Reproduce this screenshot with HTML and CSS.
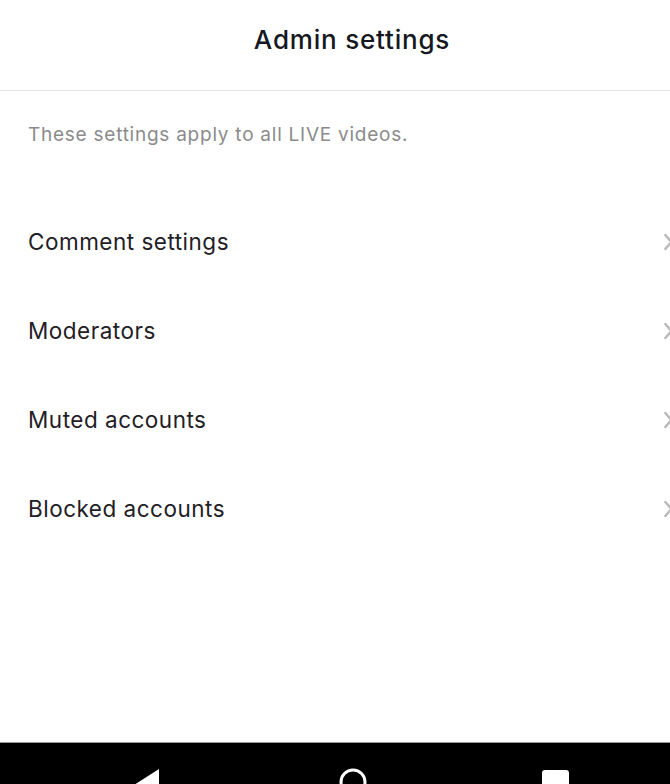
FILE: index.html
```html
<!DOCTYPE html>
<html lang="en">
<head>
  <meta charset="UTF-8" />
  <meta name="viewport" content="width=device-width, initial-scale=1.0"/>
  <title>Admin settings</title>
  <link rel="stylesheet" href="styles.css">
</head>
<body>
  <div class="screen">
    <header class="topbar">
      <h1>Admin settings</h1>
    </header>

    <p class="intro">These settings apply to all LIVE videos.</p>

    <ul class="menu">
      <li class="menu-item">
        <span>Comment settings</span>
        <svg class="chev" viewBox="0 0 10 18"><path d="M2 2l6 7-6 7" /></svg>
      </li>
      <li class="menu-item">
        <span>Moderators</span>
        <svg class="chev" viewBox="0 0 10 18"><path d="M2 2l6 7-6 7" /></svg>
      </li>
      <li class="menu-item">
        <span>Muted accounts</span>
        <svg class="chev" viewBox="0 0 10 18"><path d="M2 2l6 7-6 7" /></svg>
      </li>
      <li class="menu-item">
        <span>Blocked accounts</span>
        <svg class="chev" viewBox="0 0 10 18"><path d="M2 2l6 7-6 7" /></svg>
      </li>
    </ul>

    <!-- android nav bar, icons cut off at the bottom -->
    <nav class="navbar">
      <svg class="nav-back" viewBox="0 0 30 30"><path d="M25 1 L0 17 L25 33 Z" /></svg>
      <svg class="nav-home" viewBox="0 0 30 30"><circle cx="15" cy="15" r="12" /></svg>
      <span class="nav-recent"></span>
    </nav>
  </div>
</body>
</html>
```

FILE: styles.css
```css
* {
  box-sizing: border-box;
}
html, body {
  margin: 0;
  padding: 0;
  background: #fff;
}
body {
  font-family: Inter, "Noto Sans", sans-serif;
  overflow: hidden;
}
.screen {
  width: 670px;
  height: 784px;
  display: flex;
  flex-direction: column;
  overflow: hidden;
}
.topbar {
  height: 91px;
  border-bottom: 1px solid #e3e3e3;
  display: flex;
  justify-content: center;
  padding: 24px 0 0 34px;
}
.topbar h1 {
  margin: 0;
  font-size: 26px;
  font-weight: 500;
  color: #16181f;
  line-height: 32px;
  letter-spacing: 0.8px;
}
.intro {
  margin: 0;
  padding: 32px 28px 0;
  height: 106px;
  font-size: 19px;
  line-height: 24px;
  color: #8b8b8b;
  letter-spacing: 0.75px;
}
.menu {
  list-style: none;
  margin: 0;
  padding: 0;
}
.menu-item {
  height: 89px;
  display: flex;
  align-items: center;
  justify-content: space-between;
  padding-left: 28px;
  font-size: 22.5px;
  color: #1f2026;
  letter-spacing: 0.5px;
}
.chev {
  width: 12px;
  height: 20px;
  margin-right: -4px;
  fill: none;
  stroke: #b9b9b9;
  stroke-width: 2.2;
}
.navbar {
  margin-top: auto;
  height: 42px;
  background: #000;
  border-top: 1px solid #9a9a9a;
  display: flex;
  align-items: flex-start;
  overflow: hidden;
}
.nav-back {
  width: 30px;
  height: 30px;
  margin: 25px 0 0 134px;
  fill: #fff;
  overflow: visible;
}
.nav-home {
  width: 30px;
  height: 30px;
  margin: 24px 0 0 174px;
  fill: none;
  stroke: #fff;
  stroke-width: 3;
}
.nav-recent {
  width: 27px;
  height: 27px;
  margin: 27px 0 0 174px;
  background: #fff;
  border-radius: 3px;
}
```
